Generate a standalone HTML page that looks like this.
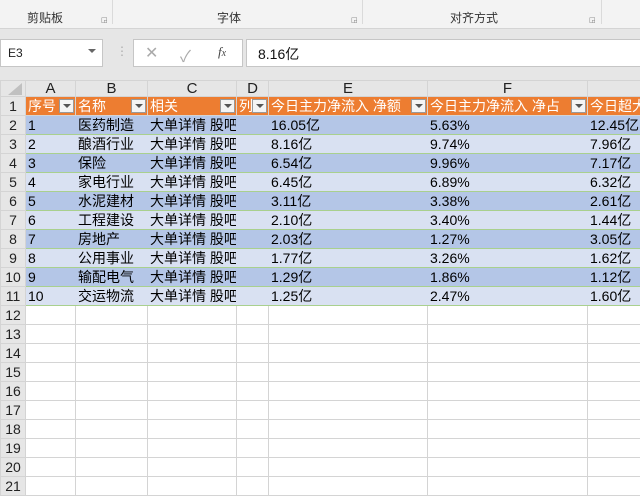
<!DOCTYPE html>
<html><head><meta charset="utf-8"><style>
*{margin:0;padding:0;box-sizing:border-box}
body{width:640px;height:480px;overflow:hidden;background:#fff;font-family:"Liberation Sans","Noto Sans CJK SC",sans-serif;position:relative}
.abs{position:absolute}
.rib{left:0;top:0;width:640px;height:28px;background:#f3f3f3}
.rl{top:9px;font-size:12px;color:#333}
.vs{top:0;width:1px;height:24px;background:#dadada}
.band{left:0;top:28px;width:640px;height:52px;background:#e6e6e6;border-top:1px solid #d4d4d4}
.box{background:#fff;border:1px solid #c6c6c6}
.grid{left:0;top:80px;width:700px}
table{border-collapse:collapse;table-layout:fixed;font-size:14px;width:647px}
td{height:19px;border:1px solid #d4d4d4;padding:0 2px;white-space:nowrap;overflow:hidden;color:#000;line-height:17px}
td.rh{background:#e6e6e6;color:#222;text-align:center;font-size:14px;padding:0}
tr.ch td{height:16px;background:#e6e6e6;text-align:center;font-size:15px;line-height:14px;color:#222}
tr.hd td{background:#ed7d31;color:#fff;position:relative}
tr.hd td.rh{background:#e6e6e6;color:#222}
.dd{position:absolute;right:1px;top:2px;width:15px;height:14px;background:#f4f4f4;border:1px solid #999}
.dd:after{content:"";position:absolute;left:3px;top:4px;border-left:4px solid transparent;border-right:4px solid transparent;border-top:4px solid #555}
tr.a td{background:#b4c6e7;border-bottom:1px solid #a9d08e;border-left-color:#b4c6e7;border-right-color:#b4c6e7}
tr.b td{background:#d9e1f2;border-bottom:1px solid #a9d08e;border-left-color:#d9e1f2;border-right-color:#d9e1f2}
tr.a td.rh,tr.b td.rh{background:#e6e6e6;border-color:#d4d4d4}
</style></head><body>
<div class="abs rib"></div>
<div class="abs rl" style="left:27px">剪贴板</div>
<div class="abs" style="left:101px;top:16px;font-size:7px;color:#777">◲</div>
<div class="abs vs" style="left:112px"></div>
<div class="abs rl" style="left:217px">字体</div>
<div class="abs" style="left:351px;top:16px;font-size:7px;color:#777">◲</div>
<div class="abs vs" style="left:362px"></div>
<div class="abs rl" style="left:450px">对齐方式</div>
<div class="abs" style="left:589px;top:16px;font-size:7px;color:#777">◲</div>
<div class="abs vs" style="left:601px"></div>
<div class="abs band"></div>
<div class="abs box" style="left:0;top:39px;width:103px;height:28px"></div>
<div class="abs" style="left:8px;top:46px;font-size:12px;color:#222">E3</div>
<div class="abs" style="left:88px;top:49px;border-left:4px solid transparent;border-right:4px solid transparent;border-top:4px solid #666"></div>
<div class="abs" style="left:116px;top:44px;font-size:12px;color:#aaa">⋮</div>
<div class="abs box" style="left:133px;top:39px;width:110px;height:28px"></div>
<div class="abs" style="left:145px;top:43px;font-size:16px;color:#aaa">✕</div>
<div class="abs" style="left:180px;top:43px;font-size:16px;color:#aaa">✓</div>
<div class="abs" style="left:218px;top:44px;font-size:13px;color:#444;font-style:italic;font-family:'Liberation Serif',serif">f<span style="font-size:10px">x</span></div>
<div class="abs box" style="left:246px;top:39px;width:400px;height:28px"></div>
<div class="abs" style="left:258px;top:44px;font-size:14px;color:#111">8.16亿</div>
<div class="abs grid"><table>
<colgroup><col style="width:25px"><col style="width:50px"><col style="width:72px"><col style="width:89px"><col style="width:32px"><col style="width:159px"><col style="width:160px"><col style="width:60px"></colgroup>
<tr class="ch"><td class="rh" style="background:#e6e6e6;position:relative"><span style="position:absolute;right:3px;bottom:1px;width:0;height:0;border-left:14px solid transparent;border-bottom:12px solid #c0c0c0"></span></td><td>A</td><td>B</td><td>C</td><td>D</td><td>E</td><td>F</td><td></td></tr>
<tr class="hd"><td class="rh">1</td><td>序号<span class="dd"></span></td><td>名称<span class="dd"></span></td><td>相关<span class="dd"></span></td><td>列<span class="dd"></span></td><td>今日主力净流入 净额<span class="dd"></span></td><td>今日主力净流入 净占<span class="dd"></span></td><td>今日超大</td></tr>
<tr class="a"><td class="rh">2</td><td>1</td><td>医药制造</td><td>大单详情 股吧</td><td></td><td>16.05亿</td><td>5.63%</td><td>12.45亿</td></tr>
<tr class="b"><td class="rh">3</td><td>2</td><td>酿酒行业</td><td>大单详情 股吧</td><td></td><td>8.16亿</td><td>9.74%</td><td>7.96亿</td></tr>
<tr class="a"><td class="rh">4</td><td>3</td><td>保险</td><td>大单详情 股吧</td><td></td><td>6.54亿</td><td>9.96%</td><td>7.17亿</td></tr>
<tr class="b"><td class="rh">5</td><td>4</td><td>家电行业</td><td>大单详情 股吧</td><td></td><td>6.45亿</td><td>6.89%</td><td>6.32亿</td></tr>
<tr class="a"><td class="rh">6</td><td>5</td><td>水泥建材</td><td>大单详情 股吧</td><td></td><td>3.11亿</td><td>3.38%</td><td>2.61亿</td></tr>
<tr class="b"><td class="rh">7</td><td>6</td><td>工程建设</td><td>大单详情 股吧</td><td></td><td>2.10亿</td><td>3.40%</td><td>1.44亿</td></tr>
<tr class="a"><td class="rh">8</td><td>7</td><td>房地产</td><td>大单详情 股吧</td><td></td><td>2.03亿</td><td>1.27%</td><td>3.05亿</td></tr>
<tr class="b"><td class="rh">9</td><td>8</td><td>公用事业</td><td>大单详情 股吧</td><td></td><td>1.77亿</td><td>3.26%</td><td>1.62亿</td></tr>
<tr class="a"><td class="rh">10</td><td>9</td><td>输配电气</td><td>大单详情 股吧</td><td></td><td>1.29亿</td><td>1.86%</td><td>1.12亿</td></tr>
<tr class="b"><td class="rh">11</td><td>10</td><td>交运物流</td><td>大单详情 股吧</td><td></td><td>1.25亿</td><td>2.47%</td><td>1.60亿</td></tr>
<tr><td class="rh">12</td><td></td><td></td><td></td><td></td><td></td><td></td><td></td></tr>
<tr><td class="rh">13</td><td></td><td></td><td></td><td></td><td></td><td></td><td></td></tr>
<tr><td class="rh">14</td><td></td><td></td><td></td><td></td><td></td><td></td><td></td></tr>
<tr><td class="rh">15</td><td></td><td></td><td></td><td></td><td></td><td></td><td></td></tr>
<tr><td class="rh">16</td><td></td><td></td><td></td><td></td><td></td><td></td><td></td></tr>
<tr><td class="rh">17</td><td></td><td></td><td></td><td></td><td></td><td></td><td></td></tr>
<tr><td class="rh">18</td><td></td><td></td><td></td><td></td><td></td><td></td><td></td></tr>
<tr><td class="rh">19</td><td></td><td></td><td></td><td></td><td></td><td></td><td></td></tr>
<tr><td class="rh">20</td><td></td><td></td><td></td><td></td><td></td><td></td><td></td></tr>
<tr><td class="rh">21</td><td></td><td></td><td></td><td></td><td></td><td></td><td></td></tr>
</table></div>
</body></html>
